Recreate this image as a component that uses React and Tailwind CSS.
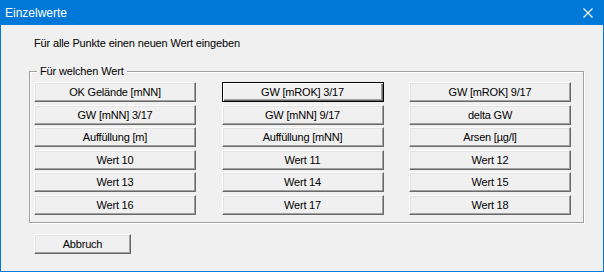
import React from "react";

const rows = [
  ["OK Gelände [mNN]", "GW [mROK] 3/17", "GW [mROK] 9/17"],
  ["GW [mNN] 3/17", "GW [mNN] 9/17", "delta GW"],
  ["Auffüllung [m]", "Auffüllung [mNN]", "Arsen [µg/l]"],
  ["Wert 10", "Wert 11", "Wert 12"],
  ["Wert 13", "Wert 14", "Wert 15"],
  ["Wert 16", "Wert 17", "Wert 18"],
];

const rowGaps = ["mt-0", "mt-[3px]", "mt-[2px]", "mt-[3px]", "mt-[2px]", "mt-[3px]"];

const WinButton = ({ label, isDefault, className = "" }) => (
  <button
    className={`h-[20px] flex items-center justify-center text-[11px] tracking-[-0.2px] text-black bg-[#f0f0f0] leading-none ${
      isDefault
        ? "border border-black shadow-[inset_1px_1px_0_#fff,inset_-1px_-1px_0_#696969,inset_-2px_-2px_0_#a0a0a0]"
        : "border border-t-white border-l-white border-r-[#696969] border-b-[#696969] shadow-[inset_-1px_-1px_0_#a0a0a0,inset_1px_1px_0_#e3e3e3]"
    } ${className}`}
  >
    {label}
  </button>
);

export default function App() {
  return (
    <div
      className="w-[604px] h-[272px] bg-[#f0f0f0] border-x border-b border-[#0078d7] flex flex-col"
      style={{ fontFamily: '"Liberation Sans", Arial, sans-serif' }}
    >
      {/* Title bar */}
      <div className="h-[25px] shrink-0 bg-[#0078d7] -mx-px flex items-center justify-between pl-[5px] pr-[11px]">
        <span className="text-white text-[12px] leading-none">Einzelwerte</span>
        <svg width="10" height="10" viewBox="0 0 10 10">
          <path d="M0.5 0.5 L9.5 9.5 M9.5 0.5 L0.5 9.5" stroke="#fff" strokeWidth="1.1" />
        </svg>
      </div>

      {/* Prompt */}
      <div className="pl-[33px] mt-[12px] h-[13px] text-[11px] tracking-[-0.15px] leading-[13px] text-black">
        Für alle Punkte einen neuen Wert eingeben
      </div>

      {/* Group box */}
      <div className="relative ml-[28px] mt-[21px] w-[555px] border border-[#a0a0a0] shadow-[1px_1px_0_#fff,inset_1px_1px_0_#fff] pt-[10px] pb-[7px] pl-[4px]">
        <span className="absolute left-[7px] -top-[7px] px-[3px] bg-[#f0f0f0] text-[11px] tracking-[-0.15px] leading-[13px] text-black">
          Für welchen Wert
        </span>
        <div className="w-[537px] flex flex-col">
          {rows.map((row, i) => (
            <div key={i} className={`flex justify-between ${rowGaps[i]}`}>
              {row.map((label, j) => (
                <WinButton
                  key={j}
                  label={label}
                  isDefault={i === 0 && j === 1}
                  className="w-[162px]"
                />
              ))}
            </div>
          ))}
        </div>
      </div>

      {/* Cancel */}
      <div className="pl-[33px] mt-[11px]">
        <WinButton label="Abbruch" className="w-[97px]" />
      </div>
    </div>
  );
}
